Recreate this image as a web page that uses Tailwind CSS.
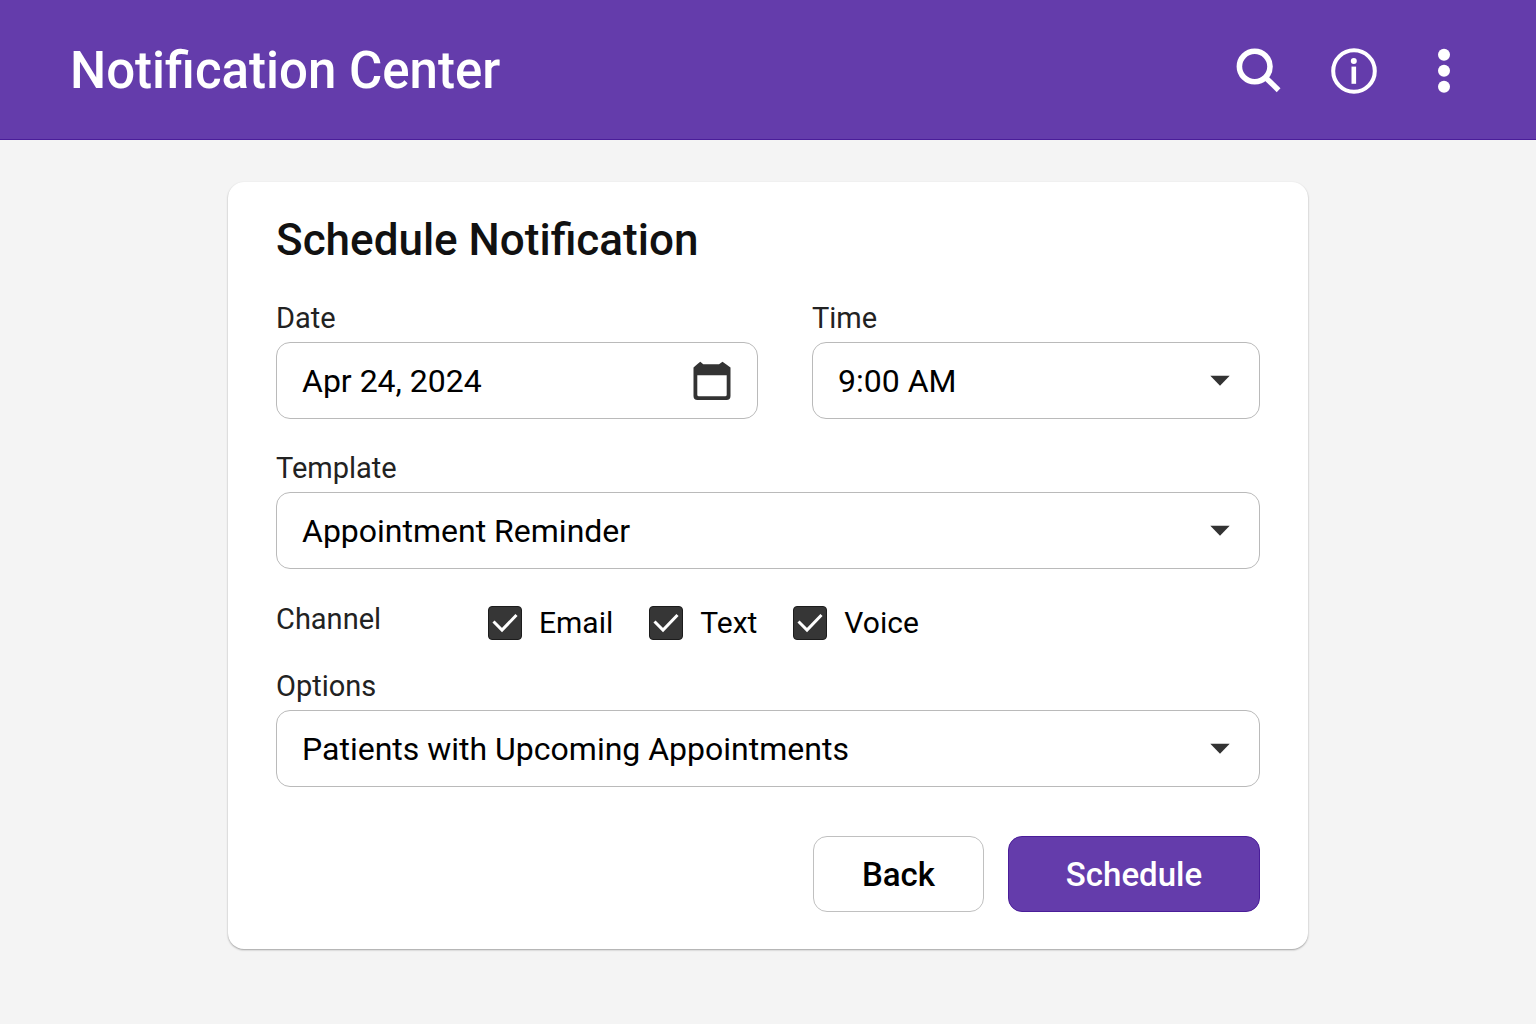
<!DOCTYPE html>
<html lang="en">
<head>
<meta charset="utf-8">
<meta name="viewport" content="width=device-width, initial-scale=1">
<title>Notification Center</title>
<script src="https://cdn.jsdelivr.net/npm/@tailwindcss/browser@4"></script>
</head>
<body class="min-h-screen bg-[#f4f4f4] font-['Roboto',sans-serif] text-black">
  <header class="flex h-[140px] items-center justify-between border-b border-[#4a1d99] bg-[#643cab] pt-[3px] pr-[68px] pl-[70px] text-white">
    <h1 class="text-[51px] leading-[64px] font-medium">Notification Center</h1>
    <nav class="flex items-center gap-[42px]" aria-label="Toolbar">
      <button type="button" aria-label="Search">
        <svg class="block h-12 w-[52px]" viewBox="0 0 52 48" fill="none" stroke="currentColor">
          <circle cx="18.7" cy="19.5" r="15.3" stroke-width="5.6"/>
          <path d="M29 30 42.6 43.2" stroke-width="5.4"/>
        </svg>
      </button>
      <button type="button" aria-label="Information">
        <svg class="block size-12" viewBox="0 0 48 48" fill="none" stroke="currentColor">
          <circle cx="24" cy="24" r="20.8" stroke-width="4"/>
          <circle cx="23.8" cy="13.9" r="3" fill="currentColor" stroke="none"/>
          <path d="M23.8 19.6v17.2" stroke-width="4.6"/>
        </svg>
      </button>
      <button type="button" aria-label="More options">
        <svg class="block size-12" viewBox="0 0 48 48" fill="currentColor">
          <circle cx="24" cy="7.8" r="6"/><circle cx="24" cy="23.8" r="6"/><circle cx="24" cy="39.8" r="6"/>
        </svg>
      </button>
    </nav>
  </header>

  <main class="px-6 py-[42px]">
    <form class="mx-auto flex max-w-[1080px] flex-col rounded-2xl bg-white px-12 pt-7 pb-[37px] shadow-[0_1px_2px_rgba(0,0,0,0.35)]">
      <h2 class="text-[44px] leading-[60px] font-medium text-[#111111]">Schedule Notification</h2>

      <div class="mt-[30px] grid grid-cols-[482fr_448fr] gap-[54px]">
        <div class="flex flex-col gap-[6px]">
          <label for="date" class="text-[29px] leading-9 text-[#222222]">Date</label>
          <div class="flex h-[77px] items-center rounded-[14px] border border-[#bababa] px-[25px]">
            <input id="date" type="text" value="Apr 24, 2024" class="w-0 grow bg-transparent text-[32px] leading-10 outline-none">
            <button type="button" aria-label="Open calendar">
              <svg class="block size-10" viewBox="0 0 40 40">
                <path d="M1.5 6.5 5.5 3 8.3 .7 11.3 3.2H27L30.5 .7 34 3.2 38.5 6.5V35Q38.5 39 34.5 39H5.5Q1.5 39 1.5 35Z" fill="#333333"/>
                <path d="M5.3 14.2H34.7V33.7Q34.7 35.2 33.2 35.2H6.8Q5.3 35.2 5.3 33.7Z" fill="#ffffff"/>
              </svg>
            </button>
          </div>
        </div>
        <div class="flex flex-col gap-[6px]">
          <label for="time" class="text-[29px] leading-9 text-[#222222]">Time</label>
          <div class="grid items-center">
            <select id="time" class="col-start-1 row-start-1 h-[77px] w-full appearance-none rounded-[14px] border border-[#bababa] bg-white px-[25px] pt-px text-[32px] leading-10"><option>9:00 AM</option></select>
            <svg class="pointer-events-none col-start-1 row-start-1 mr-7 h-3 w-6 justify-self-end" viewBox="0 0 24 12"><path d="M2.3 .8h19.4L12 10.8Z" fill="#333333"/></svg>
          </div>
        </div>
      </div>

      <div class="mt-[31px] flex flex-col gap-[6px]">
        <label for="template" class="text-[29px] leading-9 text-[#222222]">Template</label>
        <div class="grid items-center">
          <select id="template" class="col-start-1 row-start-1 h-[77px] w-full appearance-none rounded-[14px] border border-[#bababa] bg-white px-[25px] pt-px text-[32px] leading-10"><option>Appointment Reminder</option></select>
          <svg class="pointer-events-none col-start-1 row-start-1 mr-7 h-3 w-6 justify-self-end" viewBox="0 0 24 12"><path d="M2.3 .8h19.4L12 10.8Z" fill="#333333"/></svg>
        </div>
      </div>

      <div class="mt-8 flex" role="group" aria-labelledby="channel">
        <span id="channel" class="w-[212px] text-[29px] leading-9 text-[#222222]">Channel</span>
        <div class="flex gap-9 pt-1 text-[30px] leading-9">
          <label class="flex items-center gap-[17px]">
            <span class="grid">
              <input type="checkbox" checked class="peer col-start-1 row-start-1 size-[34px] appearance-none rounded border border-[#1c1c1c] checked:bg-[#363636]">
              <svg class="pointer-events-none invisible col-start-1 row-start-1 size-[34px] peer-checked:visible" viewBox="0 0 34 34" fill="none" stroke="#ffffff" stroke-width="3"><path d="M5.5 15.5 14 24 28.5 9"/></svg>
            </span>
            Email
          </label>
          <label class="flex items-center gap-[17px]">
            <span class="grid">
              <input type="checkbox" checked class="peer col-start-1 row-start-1 size-[34px] appearance-none rounded border border-[#1c1c1c] checked:bg-[#363636]">
              <svg class="pointer-events-none invisible col-start-1 row-start-1 size-[34px] peer-checked:visible" viewBox="0 0 34 34" fill="none" stroke="#ffffff" stroke-width="3"><path d="M5.5 15.5 14 24 28.5 9"/></svg>
            </span>
            Text
          </label>
          <label class="flex items-center gap-[17px]">
            <span class="grid">
              <input type="checkbox" checked class="peer col-start-1 row-start-1 size-[34px] appearance-none rounded border border-[#1c1c1c] checked:bg-[#363636]">
              <svg class="pointer-events-none invisible col-start-1 row-start-1 size-[34px] peer-checked:visible" viewBox="0 0 34 34" fill="none" stroke="#ffffff" stroke-width="3"><path d="M5.5 15.5 14 24 28.5 9"/></svg>
            </span>
            Voice
          </label>
        </div>
      </div>

      <div class="mt-[27px] flex flex-col gap-[6px]">
        <label for="options" class="text-[29px] leading-9 text-[#222222]">Options</label>
        <div class="grid items-center">
          <select id="options" class="col-start-1 row-start-1 h-[77px] w-full appearance-none rounded-[14px] border border-[#bababa] bg-white px-[25px] pt-px text-[32px] leading-10"><option>Patients with Upcoming Appointments</option></select>
          <svg class="pointer-events-none col-start-1 row-start-1 mr-7 h-3 w-6 justify-self-end" viewBox="0 0 24 12"><path d="M2.3 .8h19.4L12 10.8Z" fill="#333333"/></svg>
        </div>
      </div>

      <div class="mt-[49px] flex justify-end gap-6 text-[33px] leading-10 font-medium">
        <button type="button" class="h-[76px] w-[171px] rounded-[14px] border border-[#c0c0c0] bg-white pt-px">Back</button>
        <button type="submit" class="h-[76px] w-[252px] rounded-[14px] border border-[#4a1d99] bg-[#643cab] pt-px text-white">Schedule</button>
      </div>
    </form>
  </main>
</body>
</html>
